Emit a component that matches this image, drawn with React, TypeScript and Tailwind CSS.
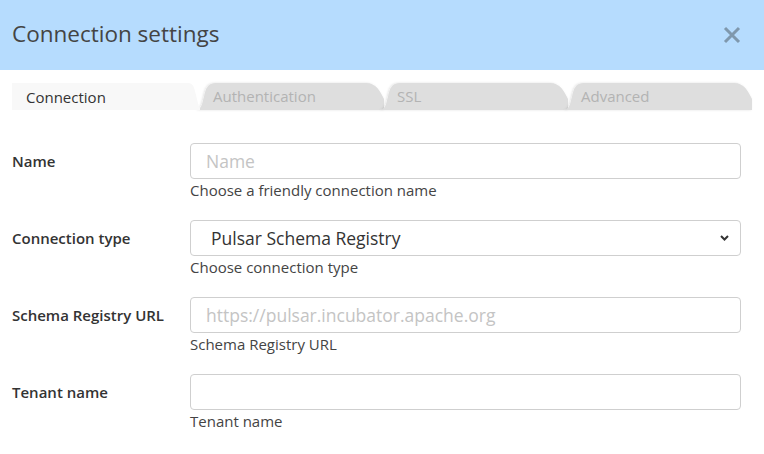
import { useState } from "react";

const tabs = ["Connection", "Authentication", "SSL", "Advanced"];

function TabShape({ active }: { active: boolean }) {
  // chrome-ish tab outline, stretched to the tab box
  if (active) {
    return (
      <svg className="absolute inset-0 h-full w-full" viewBox="0 0 190 27" preserveAspectRatio="none">
        <path d="M0,0 L178,0 C183,0 184,4 186,12 C188,21 189,27 194,27 L0,27 Z" fill="#f8f8f8" />
      </svg>
    );
  }
  return (
    <svg className="absolute inset-0 h-full w-full overflow-visible" viewBox="0 0 190 27" preserveAspectRatio="none">
      <defs>
        <filter id="tabshade" x="-5%" y="-20%" width="110%" height="140%">
          <feDropShadow dx="-1" dy="0" stdDeviation="1" floodColor="#000" floodOpacity="0.12" />
        </filter>
      </defs>
      <path
        d="M0,27 C5,27 6,22 8,14 C10,5 12,0 20,0 L172,0 C182,0 186,8 190,16 L190,27 Z"
        fill="#dedede"
        filter="url(#tabshade)"
      />
    </svg>
  );
}

function Field({
  label,
  help,
  children,
}: {
  label: string;
  help: string;
  children: React.ReactNode;
}) {
  return (
    <div className="flex">
      <div className="flex h-9 w-[178px] shrink-0 items-center text-[15px] font-semibold text-[#333]">{label}</div>
      <div className="flex-1">
        {children}
        <div className="mt-[1px] text-[15px] leading-[20px] text-[#444]">{help}</div>
      </div>
    </div>
  );
}

const inputCls =
  "block h-9 w-full rounded-[4px] border border-[#cfcfcf] bg-white pl-[15px] pr-4 text-[17.5px] text-[#333] placeholder:text-[#c4c4c4] focus:outline-none";

export default function App() {
  const [active, setActive] = useState(0);
  const [name, setName] = useState("");
  const [url, setUrl] = useState("");
  const [tenant, setTenant] = useState("");

  return (
    <div className="min-h-[454px] bg-white" style={{ fontFamily: "'Open Sans', 'Liberation Sans', sans-serif" }}>
      <div className="flex h-[70px] items-center justify-between bg-[#b6dcfe] pl-3 pr-[22px]">
        <h1 className="text-[22.5px] leading-none text-[#444] pb-[2px]">Connection settings</h1>
        <button className="text-[#7f98ad]" title="Close">
          <svg width="20" height="20" viewBox="0 0 20 20">
            <path d="M3,3 L17,17 M17,3 L3,17" stroke="currentColor" strokeWidth="3" />
          </svg>
        </button>
      </div>

      <div className="mt-[13px] flex h-[27px] px-3">
        {tabs.map((t, i) => (
          <button
            key={t}
            onClick={() => setActive(i)}
            className={
              "relative h-[27px] w-[188px] shrink-0 text-left text-[15px] " +
              (i === 0 ? "" : "-ml-[4px] ") +
              (i === active ? "z-10 text-[#333]" : "text-[#b3b3b3]")
            }
          >
            <TabShape active={i === active} />
            <span className={"relative " + (i === active ? "pl-[14px] leading-[29px]" : "pl-[17px] leading-[27px] block -mt-[1px]")}>
              {t}
            </span>
          </button>
        ))}
      </div>

      <div className="flex flex-col gap-[20px] pl-3 pr-[23px] pt-[33px]">
        <Field label="Name" help="Choose a friendly connection name">
          <input className={inputCls} placeholder="Name" value={name} onChange={(e) => setName(e.target.value)} />
        </Field>
        <Field label="Connection type" help="Choose connection type">
          <div className="relative">
            <select className={inputCls + " appearance-none pl-[20px]"} defaultValue="pulsar">
              <option value="pulsar">Pulsar Schema Registry</option>
              <option value="confluent">Confluent Schema Registry</option>
            </select>
            <svg className="pointer-events-none absolute right-[12px] top-[15px]" width="9" height="6" viewBox="0 0 9 6">
              <path d="M1,1 L4.5,4.5 L8,1" fill="none" stroke="#333" strokeWidth="2" />
            </svg>
          </div>
        </Field>
        <Field label="Schema Registry URL" help="Schema Registry URL">
          <input
            className={inputCls}
            placeholder="https://pulsar.incubator.apache.org"
            value={url}
            onChange={(e) => setUrl(e.target.value)}
          />
        </Field>
        <Field label="Tenant name" help="Tenant name">
          <input className={inputCls} value={tenant} onChange={(e) => setTenant(e.target.value)} />
        </Field>
      </div>
    </div>
  );
}
